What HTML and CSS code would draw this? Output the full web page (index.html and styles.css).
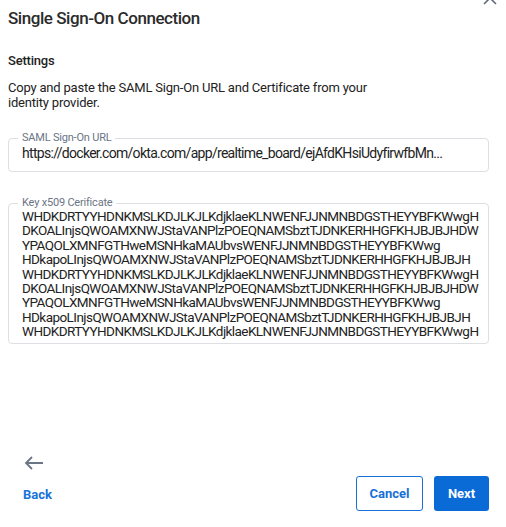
FILE: index.html
```html
<!DOCTYPE html>
<html>
<head>
<meta charset="utf-8">
<link rel="stylesheet" href="styles.css">
</head>
<body>
<div class="dialog">
  <svg class="collapse" width="16" height="10" viewBox="0 0 16 10"><path d="M2 7 L8 1 L14 7" fill="none" stroke="#5f6b7a" stroke-width="1.6"/></svg>
  <h1 class="title">Single Sign-On Connection</h1>
  <h2 class="section">Settings</h2>
  <p class="desc">Copy and paste the SAML Sign-On URL and Certificate from your identity provider.</p>
  <fieldset class="field url-field">
    <legend>SAML Sign-On URL</legend>
    <div class="value">https://docker.com/okta.com/app/realtime_board/ejAfdKHsiUdyfirwfbMn...</div>
  </fieldset>
  <fieldset class="field cert-field">
    <legend>Key x509 Cerificate</legend>
    <div class="cert">WHDKDRTYYHDNKMSLKDJLKJLKdjklaeKLNWENFJJNMNBDGSTHEYYBFKWwgH<br>DKOALInjsQWOAMXNWJStaVANPlzPOEQNAMSbztTJDNKERHHGFKHJBJBJHDW<br>YPAQOLXMNFGTHweMSNHkaMAUbvsWENFJJNMNBDGSTHEYYBFKWwg<br>HDkapoLInjsQWOAMXNWJStaVANPlzPOEQNAMSbztTJDNKERHHGFKHJBJBJH<br>WHDKDRTYYHDNKMSLKDJLKJLKdjklaeKLNWENFJJNMNBDGSTHEYYBFKWwgH<br>DKOALInjsQWOAMXNWJStaVANPlzPOEQNAMSbztTJDNKERHHGFKHJBJBJHDW<br>YPAQOLXMNFGTHweMSNHkaMAUbvsWENFJJNMNBDGSTHEYYBFKWwg<br>HDkapoLInjsQWOAMXNWJStaVANPlzPOEQNAMSbztTJDNKERHHGFKHJBJBJH<br>WHDKDRTYYHDNKMSLKDJLKJLKdjklaeKLNWENFJJNMNBDGSTHEYYBFKWwgH</div>
  </fieldset>
  <div class="spacer"></div>
  <div class="footer">
    <div class="back">
      <svg class="arrow" width="20" height="14" viewBox="0 0 20 14"><path d="M19 7 H2 M8 1 L2 7 L8 13" fill="none" stroke="#6b7585" stroke-width="1.8"/></svg>
      <a class="back-link">Back</a>
    </div>
    <div class="actions">
      <button class="btn btn-outline">Cancel</button>
      <button class="btn btn-primary">Next</button>
    </div>
  </div>
</div>
</body>
</html>
```
FILE: styles.css
```css
html, body {
  margin: 0;
  padding: 0;
  background: #fff;
}
body {
  font-family: Roboto, "Liberation Sans", sans-serif;
  color: #1f1f1f;
}
.dialog {
  position: relative;
  width: 506px;
  height: 527px;
  box-sizing: border-box;
  padding: 8px 17px 15px 8px;
  display: flex;
  flex-direction: column;
}
.collapse {
  position: absolute;
  right: 8px;
  top: -3px;
}
.title {
  margin: 0;
  font-size: 17px;
  font-weight: 500;
  line-height: 20px;
  letter-spacing: -0.45px;
  color: #2b2b2b;
}
.section {
  margin: 25px 0 0;
  font-size: 13px;
  font-weight: 500;
  line-height: 16px;
  letter-spacing: -0.2px;
  color: #222;
}
.desc {
  margin: 12px 0 0;
  width: 380px;
  font-size: 13px;
  line-height: 14.5px;
  letter-spacing: -0.2px;
  color: #222;
}
.field {
  margin: 0;
  border: 1px solid #dcdfe3;
  border-radius: 4px;
  padding: 0 13px;
  min-width: 0;
}
.field legend {
  padding: 0 4px;
  margin-left: -4px;
  font-size: 11px;
  line-height: 12px;
  letter-spacing: -0.2px;
  color: #6b7585;
}
.url-field {
  margin-top: 22px;
  padding-bottom: 9px;
}
.url-field .value {
  font-size: 14px;
  line-height: 18px;
  letter-spacing: -0.7px;
  color: #222;
  white-space: nowrap;
}
.cert-field {
  margin-top: 25px;
  padding-bottom: 4px;
}
.cert {
  font-size: 13.5px;
  line-height: 14.4px;
  letter-spacing: -0.56px;
  color: #222;
  white-space: nowrap;
}
.spacer {
  flex: 1;
}
.footer {
  display: flex;
  justify-content: space-between;
  align-items: flex-end;
}
.back {
  display: flex;
  flex-direction: column;
  align-items: flex-start;
  padding-left: 15px;
}
.arrow {
  display: block;
  margin-left: 1px;
}
.back-link {
  margin-top: 17px;
  margin-bottom: 10px;
  font-size: 13px;
  font-weight: 700;
  color: #1a73d9;
}
.actions {
  display: flex;
  gap: 11px;
  margin-bottom: 1px;
}
.btn {
  height: 35px;
  border-radius: 3px;
  font-family: Roboto, "Liberation Sans", sans-serif;
  font-size: 13px;
  font-weight: 700;
  padding: 0;
}
.btn-outline {
  width: 67px;
  background: #fff;
  border: 1.5px solid #1670d6;
  color: #1670d6;
}
.btn-primary {
  width: 55px;
  background: #0b6bd6;
  border: none;
  color: #fff;
}
```
